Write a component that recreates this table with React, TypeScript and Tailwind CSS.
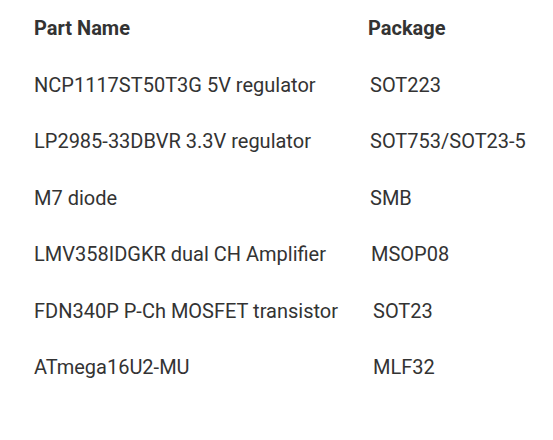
import React from "react";

const rows: { name: string; pkg: string; off: string }[] = [
  { name: "NCP1117ST50T3G 5V regulator", pkg: "SOT223", off: "pl-[2px]" },
  { name: "LP2985-33DBVR 3.3V regulator", pkg: "SOT753/SOT23-5", off: "pl-[2px]" },
  { name: "M7 diode", pkg: "SMB", off: "pl-[2px]" },
  { name: "LMV358IDGKR dual CH Amplifier", pkg: "MSOP08", off: "pl-[3px]" },
  { name: "FDN340P P-Ch MOSFET transistor", pkg: "SOT23", off: "pl-[5px]" },
  { name: "ATmega16U2-MU", pkg: "MLF32", off: "pl-[5px]" },
];

export default function App() {
  return (
    <div
      className="w-[553px] h-[440px] bg-white text-[#333333] pl-[34px] pt-[13px]"
      style={{ fontFamily: "Roboto, 'Liberation Sans', sans-serif" }}
    >
      <div className="grid grid-cols-[334px_1fr] text-[20px] leading-[30px]">
        <div className="font-bold h-[30px]">Part Name</div>
        <div className="font-bold h-[30px]">Package</div>
        {rows.map((r) => (
          <React.Fragment key={r.name}>
            <div className="mt-[26.5px]">{r.name}</div>
            <div className={`mt-[26.5px] ${r.off}`}>{r.pkg}</div>
          </React.Fragment>
        ))}
      </div>
    </div>
  );
}
